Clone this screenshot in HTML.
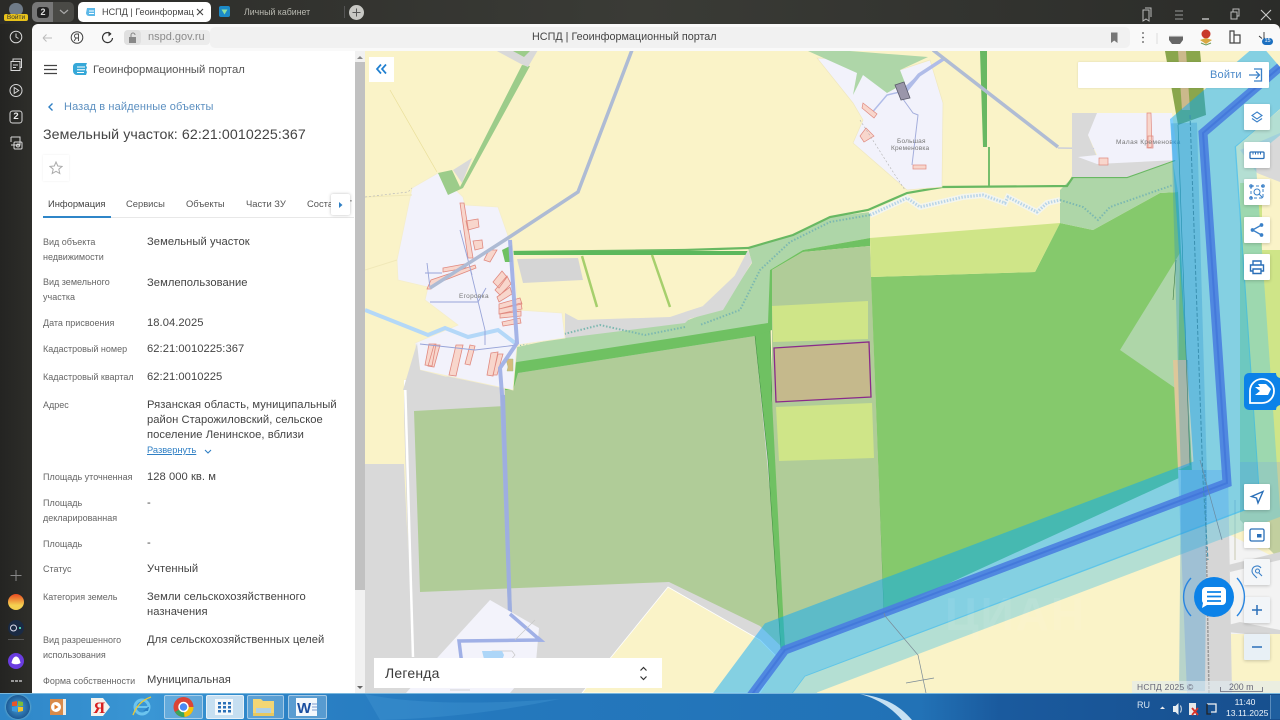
<!DOCTYPE html>
<html lang="ru"><head><meta charset="utf-8"><title>НСПД</title>
<style>
html,body{margin:0;padding:0;width:1280px;height:720px;overflow:hidden;background:#2a2a27;font-family:"Liberation Sans","DejaVu Sans",sans-serif}
.a{position:absolute;white-space:nowrap}
.l{position:absolute;left:43px;font-size:9px;line-height:15px;color:#666;white-space:nowrap}
.v{position:absolute;left:147px;font-size:11.2px;line-height:15px;color:#444;white-space:nowrap;letter-spacing:.05px;margin-top:1px}
.t{position:absolute;top:198px;font-size:9.4px;color:#555;white-space:nowrap}
.b{position:absolute;left:1244px;width:26px;height:26px;background:#fff;border-radius:1px;box-shadow:0 1px 3px rgba(0,0,0,.2)}
.b svg{position:absolute;left:0;top:0}
svg{display:block}
</style></head><body>

<!-- top bar & sidebar -->
<div class="a" style="left:0;top:0;width:1280px;height:24px;background:linear-gradient(90deg,#2b2b28,#3a3b36 50%,#2b2c29)"></div>
<div class="a" style="left:0;top:24px;width:32px;height:670px;background:linear-gradient(90deg,#242422,#2e2e2a)"></div>

<!-- top left -->
<div class="a" style="left:9px;top:3px;width:14px;height:13px;border-radius:7px;background:#6f7b88"></div>
<div class="a" style="left:4px;top:14px;width:24px;height:7px;background:#e8c21a;border-radius:2px;font-size:6.5px;line-height:7px;color:#333;text-align:center">Войти</div>
<div class="a" style="left:32px;top:2px;width:21px;height:20px;background:#777;border-radius:5px 0 0 5px"></div>
<div class="a" style="left:37px;top:7px;width:12px;height:11px;background:#222;border-radius:3px;color:#ddd;font-size:9px;line-height:11px;text-align:center;font-weight:bold">2</div>
<div class="a" style="left:53px;top:2px;width:21px;height:20px;background:#4a4a46;border-radius:0 5px 5px 0"></div>
<svg class="a" style="left:58px;top:8px" width="12" height="8"><path d="M2 2l4 3.5L10 2" fill="none" stroke="#aaa" stroke-width="1.2"/></svg>
<div class="a" style="left:78px;top:2px;width:133px;height:20px;background:#fff;border-radius:5px"></div>
<svg class="a" style="left:85px;top:6px" width="12" height="12"><path d="M2 2h8v8H4a3 3 0 0 1-3-3z" fill="#5cb8e8"/><path d="M4 5h5M4 7.500h5" stroke="#fff"/></svg>
<div class="a" style="left:102px;top:6px;width:92px;overflow:hidden;font-size:9.1px;line-height:12px;color:#444">НСПД | Геоинформаци</div>
<svg class="a" style="left:195px;top:7px" width="10" height="10"><path d="M2 2l6 6M8 2l-6 6" stroke="#444" stroke-width="1.100"/></svg>
<div class="a" style="left:219px;top:6px;width:11px;height:11px;background:#1c8ac8;border-radius:2px"></div>
<svg class="a" style="left:219px;top:6px" width="11" height="11"><path d="M2.500 3.500h6L5.500 8.500z" fill="#8fe0a0"/></svg>
<div class="a" style="left:244px;top:6px;font-size:8.8px;line-height:12px;color:#b8b8b0">Личный кабинет</div>
<div class="a" style="left:344px;top:6px;width:1px;height:12px;background:#555"></div>
<div class="a" style="left:349px;top:5px;width:15px;height:15px;border-radius:8px;background:#c8c8c4"></div>
<svg class="a" style="left:349px;top:5px" width="15" height="15"><path d="M7.500 3.500v8M3.500 7.500h8" stroke="#555" stroke-width="1"/></svg>

<!-- window buttons -->
<svg class="a" style="left:1136px;top:3px" width="144" height="20" fill="none" stroke="#bbb" stroke-width="1">
<path d="M7 7h6v11l-3-2-3 2zM9 5h6v9"/><path d="M39 8h8M39 12h8M39 16h8" stroke="#999"/><path d="M66 16h7" stroke-width="1.500"/><path d="M95 9h6v7h-6zM97 9V6h6v7h-2"/><path d="M125 7l10 10M135 7l-10 10" stroke="#ccc" stroke-width="1.100"/>
</svg>

<!-- address bar -->
<div class="a" style="left:32px;top:24px;width:1248px;height:27px;background:#f9f9f9;border-radius:6px 6px 0 0"></div>
<svg class="a" style="left:32px;top:24px" width="200" height="27" fill="none">
<path d="M11 14h9M11 14l3.500-3.500M11 14l3.500 3.500" stroke="#bbb" stroke-width="1"/>
<circle cx="45" cy="13.500" r="5.800" stroke="#444" stroke-width="1"/><path d="M46.500 17v-7h-2a2 2 0 0 0 0 4h2M44 14l-1.800 3" stroke="#444" stroke-width=".9"/>
<path d="M79 10a5 5 0 1 0 1.500 4" stroke="#333" stroke-width="1.200"/><path d="M76.500 7.500l3 2.500-3 2.500z" fill="#333"/>
</svg>
<div class="a" style="left:124px;top:30px;width:86px;height:15px;background:#ececec;border-radius:4px"></div>
<div class="a" style="left:124px;top:30px;width:17px;height:15px;background:#e0e0e0;border-radius:4px"></div>
<svg class="a" style="left:127px;top:32px" width="12" height="12"><rect x="2" y="5" width="7" height="6" fill="#888"/><path d="M4 5V3a2 2 0 0 1 4 0" fill="none" stroke="#888"/></svg>
<div class="a" style="left:148px;top:30px;font-size:11px;line-height:15px;color:#8b8b8b">nspd.gov.ru</div>
<div class="a" style="left:210px;top:27px;width:920px;height:21px;background:#f1f1f1;border-radius:5px"></div>
<div class="a" style="left:532px;top:31px;font-size:10.800px;line-height:13px;color:#444">НСПД | Геоинформационный портал</div>
<svg class="a" style="left:1108px;top:31px" width="12" height="13"><path d="M3 1.500h6.500V12L6.200 9.500 3 12z" fill="#777"/></svg>
<svg class="a" style="left:1135px;top:26px" width="145" height="24">
<circle cx="8" cy="7" r=".9" fill="#555"/><circle cx="8" cy="11.500" r=".9" fill="#555"/><circle cx="8" cy="16" r=".9" fill="#555"/>
<path d="M22 7v11" stroke="#ddd"/>
<path d="M34 9h14v5l-3 4h-8l-3-4z" fill="#666"/><path d="M34 9h14v1.500H34z" fill="#eee"/>
<circle cx="71" cy="8" r="4.500" fill="#c83a2a"/><path d="M65 14l6-2 6 2-6 4z" fill="#d9a840"/><path d="M66 17l5 2 5-2" stroke="#6a9a5a" fill="none"/>
<path d="M95 5h4v12h-4zM99 9h6v8h-6z" fill="none" stroke="#444" stroke-width="1.200"/>
<path d="M129 6v8M124 10l3 2.500M132 13l-3-1" stroke="#333" stroke-width=".9"/>
<rect x="127" y="12" width="11" height="7" rx="3.500" fill="#1b6fc0"/>
</svg>
<div class="a" style="left:1263px;top:38px;font-size:5.500px;line-height:7px;color:#fff;width:9px;text-align:center">15</div>

<!-- MAP -->
<svg class="a" style="left:0;top:0;filter:blur(.35px)" width="1280" height="694" viewBox="0 0 1280 694">
<defs><clipPath id="m"><rect x="365" y="51" width="915" height="642"/></clipPath></defs>
<g clip-path="url(#m)">
<rect x="365" y="51" width="915" height="642" fill="#faf3c8"/>
<!-- big greys -->
<path d="M365 464H404L413 657 438 693H365z" fill="#d9d9d9"/>
<path d="M403 380L503 372 515 360 760 330 790 650 722 693 668 587 582 693H412z" fill="#d9d9d9"/>
<path d="M405 380L413 657" stroke="#fff" stroke-width="2.500" fill="none"/>
<!-- yellow wedge -->
<path d="M668 587L760 640 780 660 760 693H582z" fill="#faf3c8" stroke="#fff" stroke-width=".8"/>
<!-- west yellow -->
<path d="M365 380H404V463H365z" fill="#faf3c8"/>
<!-- big olive field -->
<path d="M414 411L505 406V375L755 336 785 650 760 626 669 582 420 592z" fill="#b0cc98"/>
<!-- green strip between -->
<path d="M755 336L770 325 772 400 779 462 785 650 781 650 768 460z" fill="#6fc162" stroke="#3a8a3c" stroke-width=".5"/>
<path d="M518 373L755 336 770 325 770 270 803 250 870 238V212L830 217 793 235 748 248 752 263 723 307 680 323 598 330 517 347 512 372z" fill="#aed6a8"/>
<path d="M517 362L680 337 768 323 770 270 803 250 870 238 870 246 803 252 772 270 772 330 755 336 518 373 513 390 505 390 510 365z" fill="#6fc162"/>
<!-- parcels column -->
<path d="M772 270L803 252 870 246 884 613 785 650 772 400z" fill="#b0cc98"/>
<path d="M772 306L868 301 868 339 773 342z" fill="#cfe588"/>
<path d="M776 407L872 403 874 458 779 461z" fill="#cfe588"/>
<path d="M774 348L869 342 871 397 776 402z" fill="#c5b98c" stroke="#8a2a8a" stroke-width="1.300"/>
<path d="M871 246L884 613" stroke="#4a9050" stroke-width=".6"/>
<!-- main green -->
<path d="M871 277L1035 272 1060 223 1093 230 1160 193 1178 192 1192 472 884 613z" fill="#85c96c"/>
<path d="M870 238L1060 223 1035 272 871 277z" fill="#cfe588"/>
<path d="M1180 253L1120 350 1178 390z" fill="#aed6a8"/>
<path d="M1060 190L1060 223 1093 230 1160 193 1178 192 1173 162 1133 175 1073 177 1063 187z" fill="#aed6a8"/>
<!-- north line -->
<path d="M512 252L685 250 748 248 793 235 830 217 868 210 907 193 942 187 1067 186 1073 177 1127 177 1175 160" fill="none" stroke="#68b862" stroke-width="2.200"/>
<path d="M512 253H748" stroke="#5cb85c" stroke-width="4"/>
<path d="M582 256L597 307M652 255L670 307" stroke="#a6cf6c" stroke-width="2.500"/>
<!-- small west parcels -->
<path d="M517 259L578 258 583 280 523 283z" fill="#d5d5d5"/>
<path d="M565 313V338L685 323 748 263 752 262 723 300 685 312 670 317 578 320z" fill="#d9d9d9"/>
<path d="M748 250L752 262 723 310 685 320 685 312 722 300z" fill="#d9d9d9"/>
<!-- river -->
<path d="M870 215L907 198 920 207 963 197 983 195 1005 203 1008 197 1037 212 1047 203 1060 200" fill="none" stroke="#f3f5ee" stroke-width="6"/>
<path d="M870 215L907 198 920 207 963 197 983 195 1005 203 1008 197 1037 212 1047 203 1060 200" fill="none" stroke="#b8d4e8" stroke-width="3" stroke-dasharray="1.500 1.500"/>
<path d="M1060 200L1083 207 1098 220 1110 207 1173 185M685 327L645 335 600 325 520 345M870 215L830 222 790 242 760 270 740 310 700 325" fill="none" stroke="#7cb8b0" stroke-width="2" stroke-dasharray="1.500 1.800"/>
<!-- Egorovka -->
<path d="M412 188L438 173 463 197 465 205 498 207 513 250 518 310 562 313 565 338 517 345 513 390 420 370 415 343 458 325 425 300 428 287 398 280 397 260z" fill="#f2f2fb" stroke="#f5eecb" stroke-width=".8"/>
<path d="M417 343L403 390H498L420 370z" fill="#d9d9d9"/>
<path d="M365 310L428 335 445 328 468 337 498 330 515 343" fill="none" stroke="#b4d8f8" stroke-width="4"/>
<path d="M365 197L412 195M397 260L365 270" stroke="#f0e8b8" fill="none"/>
<g fill="#f8d6cc" stroke="#e08a80" stroke-width=".8">
<path d="M460 203L464 203 473 258 468 258zM466 221L478 219 479 227 468 230zM473 241L482 240 483 248 475 250zM489 250L497 250 490 262 484 260zM443 268L465 264 466 268 443 272z"/>
<path d="M427 289L431 280 475 265 476 268 435 284 431 289zM493 282L502 271 507 277 499 288zM495 290L507 276 511 284 500 295zM497 297L510 287 512 294 499 302zM499 304L520 298 522 304 499 309zM499 309L521 303 522 309 499 314zM500 314L521 311 521 316 500 318zM502 322L520 318 521 323 503 326z"/>
<path d="M429 344L436 344 432 366 425 365zM434 345L440 345 434 367 428 366zM456 345L463 345 456 376 449 375zM470 345L475 346 470 365 465 364zM491 353L498 352 493 376 487 375zM498 354L503 354 497 375 493 375z"/>
</g>
<path d="M427 263L430 288M425 273L442 273M430 302L478 302 486 288M470 268L485 330 485 345M420 344L475 350 517 345M460 230L472 275" fill="none" stroke="#98a4d8" stroke-width=".9"/>
<text x="459" y="298" font-size="6.500" fill="#777" letter-spacing=".3">Егоровка</text>
<path d="M508 350L506 342h7v12h-6z" fill="#d6bc7c" stroke="#a8c080" stroke-width=".5" transform="translate(0 17)"/>
<path d="M502 250L512 245 512 262 505 262z" fill="#6fc162"/>
<!-- NW strip -->
<path d="M522 65L460 187 452 170 438 173 448 195 463 188 530 66z" fill="#9ccc8a"/>
<path d="M472 158L462 183 453 170z" fill="#d9d9d9"/>
<path d="M495 50H538L528 67 521 64z" fill="#d9d9d9"/><path d="M513 51H530L524 57z" fill="#9ccc8a"/>
<path d="M390 90L437 172" stroke="#eadf9a" stroke-width=".7" fill="none"/>
<path d="M365 197L408 192 412 188" stroke="#bbb" stroke-width=".7" stroke-dasharray="2 2" fill="none"/>
<!-- blue-grey pipeline -->
<path d="M632 50L578 192 508 238 430 288" fill="none" stroke="#aebbd4" stroke-width="3.500"/>
<path d="M510 240L517 343 500 368 502 395 510 614 540 640 459 641 462 665" fill="none" stroke="#a0b0e6" stroke-width="4" stroke-opacity=".95"/>
<path d="M503 395L510 614" stroke="#9eaee0" stroke-width="4"/>
<!-- south white settlement -->
<path d="M490 600L539 628 536 662 510 693H406L438 657z" fill="#f3f3fb"/>
<path d="M510 614L540 640 459 641 462 665" fill="none" stroke="#a0b0e6" stroke-width="3.500"/>
<path d="M482 660q8-5 10-9h20l3 4-5 6z" fill="none" stroke="#c8c8c8" stroke-width=".7"/>
<path d="M482 651h20l2 4-3 8h-16z" fill="#add6f8"/>
<path d="M515 640L535 620M450 690L470 690" stroke="#c8c8c8" stroke-width=".7"/>
<!-- Bolshaya Kremenovka -->
<path d="M817 58L853 103 863 120 853 143 907 190 942 187 943 103 930 60 900 70 860 60z" fill="#f2f2fb" stroke="#f0e8c0" stroke-width=".7"/>
<path d="M808 51H850L928 57 900 70 905 83 887 93 863 75 853 95 857 73z" fill="#aed6a8"/>
<path d="M870 115L887 95 900 92 919 75" fill="none" stroke="#b0bce8" stroke-width="1.500"/>
<path d="M905 92L919 75 945 58" fill="none" stroke="#b0bce8" stroke-width="3.500"/>
<path d="M900 95L913 113 918 115 912 165" fill="none" stroke="#a4aedc" stroke-width="1"/>
<path d="M895 85L904 82 910 98 901 100z" fill="#9a96aa" stroke="#5a5a6a" stroke-width=".8"/>
<path d="M863 103L877 114 874 118 862 108zM866 128L874 136 864 142 860 136z" fill="#f8d6cc" stroke="#e08a80" stroke-width=".7"/>
<rect x="913" y="165" width="13" height="4" fill="#f8d6cc" stroke="#e08a80" stroke-width=".7"/>
<path d="M860 120L895 175 905 190" fill="none" stroke="#b0b0b0" stroke-width=".6" stroke-dasharray="2 2"/>
<text x="897" y="143" font-size="6.500" fill="#777" letter-spacing=".2">Большая</text>
<text x="891" y="150" font-size="6.500" fill="#777" letter-spacing=".2">Кременовка</text>
<!-- straight lines -->
<path d="M980 51H987V147H983z" fill="#68b862"/><path d="M989 147V187" stroke="#68b862" stroke-width="1.800"/>
<path d="M933 50L1058 147" stroke="#b0bcd4" stroke-width="3.500"/>
<path d="M1058 148L1160 149" stroke="#b4bce4" stroke-width="1"/>
<!-- Malaya -->
<path d="M1072 113H1097V133L1088 135 1097 157 1175 160 1127 177 1072 177z" fill="#d9d9d9"/>
<path d="M1097 113H1172L1178 160 1097 164 1078 157 1097 155 1088 135z" fill="#f2f2fb"/>
<path d="M1147 113H1151L1152 147 1147 148zM1099 158H1108V165H1099z" fill="#f8d6cc" stroke="#e08a80" stroke-width=".7"/>
<path d="M1148 136h5v12h-5z" fill="none" stroke="#e08a80" stroke-width=".7"/>
<text x="1116" y="144" font-size="6.500" fill="#777" letter-spacing=".4">Малая Кременовка</text>
<!-- east side -->
<path d="M1240 150L1280 133V182L1257 173z" fill="#d9d9d9"/>
<path d="M1240 183H1280V470H1240z" fill="#cfe588"/>
<path d="M1262 183H1280V250H1262z" fill="#faf3c8"/>
<path d="M1240 462H1280V560L1240 520z" fill="#c2cf9f"/>
<path d="M1220 530L1280 560V693H1228z" fill="#f3f3f3"/>
<path d="M1228 565L1280 552V560L1230 572zM1228 625L1240 622 1280 630V638L1228 632z" fill="#d6d6d6"/>
<path d="M1235 500V560" stroke="#c8c8b0"/>
<path d="M1228 634H1280V693H1228z" fill="#faf3c8"/>
<!-- road vertical -->
<path d="M1165 51H1200L1206 115 1178 125z" fill="#8aa64c"/>
<path d="M1178 51H1186L1190 110H1182z" fill="#ccb98c"/>
<path d="M1173 360H1188L1190 465 1178 470z" fill="#ddc79a"/>
<path d="M1178 125L1190 465M1176 260L1173 300" stroke="#3f7a46" stroke-width=".6"/>
<path d="M1178 470H1228L1232 693H1187z" fill="#d6d6d6"/>
<path d="M1205 470L1209 693" stroke="#9a9a9a" stroke-width="1.500" stroke-dasharray="3 1"/>
<!-- canal -->
<path d="M786 718L811 684 1270 510 1245 151 1320 90" fill="none" stroke="#60c8e0" stroke-opacity=".45" stroke-width="20" stroke-linejoin="miter"/>
<path d="M721 736L785 650 1227 483 1203 133 1280 67" fill="none" stroke="#00a8ff" stroke-opacity=".47" stroke-width="64" stroke-linejoin="miter"/>
<path d="M1180 125L1190 480 1188 693" fill="none" stroke="#2090d0" stroke-opacity=".3" stroke-width="26" transform="translate(4 -2)"/>
<path d="M721 736L785 650 1227 483 1203 133 1280 67" fill="none" stroke="#4a80e0" stroke-opacity=".9" stroke-width="9"/>
<path d="M721 736L785 650 1227 483 1203 133 1280 67" fill="none" stroke="#3f74d8" stroke-opacity=".7" stroke-width="2"/>
<path d="M1190 115L1203 480 1208 560" fill="none" stroke="#3a90b0" stroke-width="1" stroke-dasharray="4 2"/>
<path d="M884 613L885 616 918 655 926 693M906 683L934 678" fill="none" stroke="#7a8a96" stroke-width=".7"/>
<path d="M1200 460L1222 540" stroke="#6a8aa0" stroke-width=".7"/>
<text x="945" y="630" font-size="46" font-weight="bold" fill="#fff" fill-opacity=".07" letter-spacing="2">ЦИАН</text>
</g>
</svg>

<!-- panel -->
<div class="a" style="left:32px;top:51px;width:323px;height:642px;background:#fff"></div>
<div class="a" style="left:355px;top:51px;width:10px;height:642px;background:#f1f1f1"></div>
<div class="a" style="left:355px;top:62px;width:10px;height:528px;background:#c1c1c1"></div>
<svg class="a" style="left:355px;top:54px" width="10" height="640"><path d="M5 2l3 3H2z" fill="#888"/><path d="M5 635l-3-3h6z" fill="#666"/></svg>
<svg class="a" style="left:44px;top:64px" width="14" height="11"><path d="M0 1.500h13M0 5.500h13M0 9.500h13" stroke="#444" stroke-width="1.300"/></svg>
<svg class="a" style="left:72px;top:62px" width="16" height="15"><path d="M4 1h11l-1 2.500 1 2-1 2.500 1 2-1 3H5a4 4 0 0 1-4-4V4a4 4 0 0 1 3-3z" fill="#36a8d8"/><path d="M5 5h8M5 7.800h8M5 10.500h7" stroke="#fff" stroke-width="1"/></svg>
<div class="a" style="left:93px;top:63px;font-size:11.300px;line-height:14px;color:#555">Геоинформационный портал</div>
<svg class="a" style="left:47px;top:102px" width="8" height="10"><path d="M5.500 1.500L2 5l3.500 3.500" fill="none" stroke="#2f7fc4" stroke-width="1.400"/></svg>
<div class="a" style="left:64px;top:100px;font-size:11px;line-height:14px;color:#5b8fc0;letter-spacing:.12px">Назад в найденные объекты</div>
<div class="a" style="left:43px;top:127px;font-size:14.200px;line-height:17px;color:#444;letter-spacing:.1px">Земельный участок: 62:21:0010225:367</div>
<div class="a" style="left:43px;top:155px;width:26px;height:26px;background:#fff;box-shadow:0 0 2px rgba(0,0,0,.08)"></div>
<svg class="a" style="left:49px;top:161px" width="14" height="14"><path d="M7 1l1.800 4 4.300.4-3.300 2.800 1 4.300L7 10.300 3.200 12.500l1-4.300L1 5.400l4.300-.4z" fill="none" stroke="#aaa" stroke-width="1"/></svg>

<div class="t" style="left:48px;color:#444">Информация</div>
<div class="t" style="left:126px">Сервисы</div>
<div class="t" style="left:186px">Объекты</div>
<div class="t" style="left:246px">Части ЗУ</div>
<div class="t" style="left:307px;width:46px;overflow:hidden">Состав ЕГ</div>
<div class="a" style="left:43px;top:217px;width:311px;height:1px;background:#e8e8e8"></div>
<div class="a" style="left:43px;top:216px;width:68px;height:2px;background:#2f86c8"></div>
<div class="a" style="left:331px;top:194px;width:19px;height:21px;background:#fff;box-shadow:0 0 3px rgba(0,0,0,.25);border-radius:2px"></div>
<svg class="a" style="left:338px;top:201px" width="6" height="8"><path d="M1 1l3.500 3L1 7z" fill="#2f7fc4"/></svg>

<div class="l" style="top:235px">Вид объекта<br>недвижимости</div>
<div class="v" style="top:234px">Земельный участок</div>
<div class="l" style="top:275px">Вид земельного<br>участка</div>
<div class="v" style="top:275px">Землепользование</div>
<div class="l" style="top:316px">Дата присвоения</div>
<div class="v" style="top:315px">18.04.2025</div>
<div class="l" style="top:342px">Кадастровый номер</div>
<div class="v" style="top:341px">62:21:0010225:367</div>
<div class="l" style="top:370px">Кадастровый квартал</div>
<div class="v" style="top:369px">62:21:0010225</div>
<div class="l" style="top:398px">Адрес</div>
<div class="v" style="top:397px">Рязанская область, муниципальный<br>район Старожиловский, сельское<br>поселение Ленинское, вблизи</div>
<div class="a" style="left:147px;top:444px;font-size:9.300px;line-height:13px;color:#2f7fc4;text-decoration:underline">Развернуть</div>
<svg class="a" style="left:203px;top:448px" width="10" height="8"><path d="M2 2l3 3 3-3" fill="none" stroke="#2f7fc4" stroke-width="1.100"/></svg>
<div class="l" style="top:470px">Площадь уточненная</div>
<div class="v" style="top:469px">128 000 кв. м</div>
<div class="l" style="top:496px">Площадь<br>декларированная</div>
<div class="v" style="top:495px">-</div>
<div class="l" style="top:537px">Площадь</div>
<div class="v" style="top:535px">-</div>
<div class="l" style="top:562px">Статус</div>
<div class="v" style="top:561px">Учтенный</div>
<div class="l" style="top:590px">Категория земель</div>
<div class="v" style="top:589px">Земли сельскохозяйственного<br>назначения</div>
<div class="l" style="top:633px">Вид разрешенного<br>использования</div>
<div class="v" style="top:632px">Для сельскохозяйственных целей</div>
<div class="l" style="top:674px">Форма собственности</div>
<div class="v" style="top:672px">Муниципальная</div>

<!-- sidebar icons -->
<svg class="a" style="left:0;top:24px" width="32" height="670" fill="none" stroke="#d8d8d8" stroke-width="1">
<circle cx="16" cy="13" r="5.800"/><path d="M16 9.500V13l2.500 1.500"/>
<path d="M11 37.500h9v9h-9zM13 37v-2h8.500v8.500H20M13 41h5M13 43.500h3"/>
<circle cx="16" cy="66.500" r="6"/><path d="M14.200 63.500l4.500 3-4.500 3z"/>
<rect x="10" y="87" width="12" height="12" rx="2.500"/>
<path d="M11 113h9v8h-9M11 113v5"/><rect x="14" y="118" width="8" height="7" rx="1"/><circle cx="18" cy="121.500" r="1.500"/>
<path d="M16 546v11M10.500 551.500h11" stroke="#888"/>
<path d="M8 615.500h16" stroke="#555"/>
</svg>
<div class="a" style="left:10px;top:111px;width:12px;text-align:center;font-size:9.500px;line-height:12px;color:#eee;font-weight:bold">2</div>
<div class="a" style="left:8px;top:594px;width:16px;height:16px;border-radius:8px;background:linear-gradient(180deg,#e84a22,#f5d050 70%)"></div>
<div class="a" style="left:8px;top:620px;width:16px;height:16px;border-radius:8px;background:#1a2a44"></div>
<svg class="a" style="left:8px;top:620px" width="16" height="16"><circle cx="5.500" cy="8" r="3" fill="none" stroke="#dde" stroke-width="1"/><circle cx="12" cy="8" r="1" fill="#5fc"/></svg>
<div class="a" style="left:8px;top:653px;width:16px;height:16px;border-radius:8px;background:#6a3ce0"></div>
<svg class="a" style="left:8px;top:653px" width="16" height="16"><path d="M8 3.500c2.500 0 4 3.500 4.500 6.500-1.500 1-3 1.300-4.500 1.300S5 11 3.500 10C4 7 5.500 3.500 8 3.500z" fill="#fff"/></svg>
<div class="a" style="left:11px;top:680px;width:3px;height:2px;background:#999;box-shadow:4px 0 #999,8px 0 #999"></div>

<!-- map controls -->
<div class="a" style="left:369px;top:57px;width:25px;height:25px;background:#fff"></div>
<svg class="a" style="left:375px;top:63px" width="13" height="12"><path d="M6 1.500L2 6l4 4.500M11 1.500L7 6l4 4.500" fill="none" stroke="#1f7fd0" stroke-width="1.700"/></svg>
<div class="a" style="left:1078px;top:62px;width:191px;height:26px;background:#fff;border-radius:1px;box-shadow:0 0 2px rgba(0,0,0,.12)"></div>
<div class="a" style="left:1210px;top:68px;font-size:11px;line-height:14px;color:#4a88c8;letter-spacing:.2px">Войти</div>
<svg class="a" style="left:1248px;top:68px" width="16" height="14" fill="none" stroke="#3a80c8" stroke-width="1.300"><path d="M1 7h10M8 3.500L11.500 7 8 10.500M6 1h7.500v12H6"/></svg>

<div class="b" style="top:104px"><svg width="26" height="26" fill="none" stroke="#3a80c8" stroke-width="1.100"><path d="M13 8l5 3.500-5 3.500-5-3.500zM8 14.500l5 3.500 5-3.500"/></svg></div>
<div class="b" style="top:142px"><svg width="26" height="26" fill="none" stroke="#2a6fb8" stroke-width="1.300"><rect x="6" y="10" width="14" height="6.500" rx="1"/><path d="M9 10v2.500M11.500 10v2.500M14 10v2.500M16.500 10v2.500" stroke-width="1"/></svg></div>
<div class="b" style="top:179px"><svg width="26" height="26" fill="none" stroke="#3a80c8" stroke-width="1"><path d="M7 7h12v12H7z" stroke-dasharray="3 2"/><circle cx="7" cy="7" r="1.300"/><circle cx="19" cy="7" r="1.300"/><circle cx="7" cy="19" r="1.300"/><circle cx="13" cy="13" r="3"/><path d="M15 15l4 4"/></svg></div>
<div class="b" style="top:217px"><svg width="26" height="26" fill="none" stroke="#3a80c8" stroke-width="1.300"><path d="M17.500 8L8.500 13l9 5"/><circle cx="17.500" cy="8" r="1.200" fill="#3a80c8"/><circle cx="8.500" cy="13" r="1.200" fill="#3a80c8"/><circle cx="17.500" cy="18" r="1.200" fill="#3a80c8"/></svg></div>
<div class="b" style="top:254px"><svg width="26" height="26" fill="none" stroke="#2a6fb8" stroke-width="1.400"><path d="M9 11V7h8v4M9 17H6.500v-6h13v6H17M9 15h8v4.500H9z"/></svg></div>
<svg class="a" style="left:1243px;top:372px" width="37" height="38"><path d="M6 1H33Q33 5 37 6V33Q33 34 33 38H6a5 5 0 0 1-5-5V6a5 5 0 0 1 5-5z" fill="#0c82e8"/><path d="M19 7a12 12 0 1 1 0 24H7V19A12 12 0 0 1 19 7z" fill="none" stroke="#fff" stroke-width="1.800"/><path d="M12 15h5l-2-3h8l5 5-3 6H12l5-4z" fill="#fff"/></svg>
<div class="b" style="top:484px"><svg width="26" height="26" fill="none" stroke="#2a6fb8" stroke-width="1.400"><path d="M19 7.500L7.500 12.500l5 1.500 1.500 5z"/></svg></div>
<div class="b" style="top:522px"><svg width="26" height="26" fill="none" stroke="#2a6fb8" stroke-width="1.300"><rect x="6" y="7" width="14" height="12" rx="1.500"/><rect x="13" y="12" width="4.500" height="3.500" fill="#2a6fb8" stroke="none"/></svg></div>
<div class="b" style="top:559px;background:#f4f6f8"><svg width="26" height="26" fill="none" stroke="#3a80c8" stroke-width="1.100"><path d="M13 19c-3-3-5-4.500-5-7a5 5 0 0 1 9-3"/><circle cx="13.500" cy="12" r="2"/><path d="M15 14l3 3"/></svg></div>
<div class="b" style="top:597px;background:#f2f5f8"><svg width="26" height="26" stroke="#2a6fb8" stroke-width="1.500"><path d="M13 8v10M8 13h10"/></svg></div>
<div class="b" style="top:634px;background:#e8f0f6"><svg width="26" height="26" stroke="#2a6fb8" stroke-width="1.500"><path d="M8 13h10"/></svg></div>

<!-- chat -->
<svg class="a" style="left:1180px;top:572px" width="68" height="50"><path d="M11 6a28 28 0 0 0 0 38M57 6a28 28 0 0 1 0 38" fill="none" stroke="#2a86e0" stroke-width="1.400"/><circle cx="34" cy="25" r="20" fill="#0c82e8"/><path d="M26 15h16a4 4 0 0 1 4 4v10a4 4 0 0 1-4 4H27l-5 3 1-5a4 4 0 0 1-1-3V19a4 4 0 0 1 4-4z" fill="#fff" stroke="none"/><path d="M27 20h14M27 24.500h14M27 29h14" stroke="#0c82e8" stroke-width="1.700"/></svg>

<div class="a" style="left:1132px;top:681px;width:148px;height:12px;background:rgba(225,235,240,.6)"></div>
<div class="a" style="left:1137px;top:682px;font-size:8.400px;line-height:10px;color:#667;letter-spacing:.3px">НСПД 2025 ©</div>
<div class="a" style="left:1229px;top:682px;font-size:8.800px;line-height:10px;color:#667">200 m</div>
<svg class="a" style="left:1220px;top:686px" width="44" height="7"><path d="M.5 1v4.500h42V1" fill="none" stroke="#667" stroke-width=".8"/></svg>

<div class="a" style="left:374px;top:658px;width:288px;height:30px;background:#fff"></div>
<div class="a" style="left:385px;top:665px;font-size:14px;line-height:16px;color:#3a3a3a;letter-spacing:.2px">Легенда</div>
<svg class="a" style="left:639px;top:666px" width="9" height="15"><path d="M1.500 4.500L4.500 1.500l3 3M1.500 10.500l3 3 3-3" fill="none" stroke="#333" stroke-width="1.200"/></svg>

<!-- taskbar -->
<div class="a" style="left:0;top:693px;width:1280px;height:27px;background:linear-gradient(90deg,#2e86c8 0,#3a96d4 150px,#2a80c4 300px,#2478bd 500px,#2272b6 920px,#1a5a9e 1000px,#174f8e 1280px);border-top:1px solid #7ab8de;box-sizing:border-box"></div>
<svg class="a" style="left:300px;top:694px" width="980" height="26"><path d="M560 0C585 3 600 12 612 26H602C590 12 575 4 560 0z" fill="#d8ecf8" fill-opacity=".9"/><path d="M65 0Q130 14 260 5 170 24 80 26z" fill="#55a8de" fill-opacity=".25"/></svg>
<div class="a" style="left:1270px;top:695px;width:9px;height:24px;background:#1f5f9f;border-left:1px solid #5a8cbc"></div>
<!-- start orb -->
<div class="a" style="left:6px;top:695px;width:24px;height:24px;border-radius:12px;background:radial-gradient(circle,#4aa2d8,#1c5a96 70%,#223);box-shadow:0 0 2px #9cc"></div>
<svg class="a" style="left:12px;top:701px" width="12" height="12"><path d="M0 1l5-1v5H0z" fill="#e8542a"/><path d="M6 0l5 1v4H6z" fill="#7cbc3a"/><path d="M0 6h5v5L0 10z" fill="#3a9ae0"/><path d="M6 6h5v4l-5 1z" fill="#f5c32a"/></svg>
<!-- app buttons -->
<div class="a" style="left:164px;top:695px;width:39px;height:24px;background:rgba(255,255,255,.22);border:1px solid rgba(255,255,255,.45);box-sizing:border-box;border-radius:2px"></div>
<div class="a" style="left:206px;top:695px;width:38px;height:24px;background:rgba(255,255,255,.72);border:1px solid rgba(255,255,255,.6);box-sizing:border-box;border-radius:2px"></div>
<div class="a" style="left:247px;top:695px;width:37px;height:24px;background:rgba(255,255,255,.22);border:1px solid rgba(255,255,255,.45);box-sizing:border-box;border-radius:2px"></div>
<div class="a" style="left:288px;top:695px;width:39px;height:24px;background:rgba(255,255,255,.22);border:1px solid rgba(255,255,255,.45);box-sizing:border-box;border-radius:2px"></div>
<svg class="a" style="left:0;top:694px" width="340" height="26">
<rect x="50" y="5" width="16" height="16" fill="#f0ece4"/><rect x="50" y="5" width="13" height="16" fill="#d88a4a"/><circle cx="56" cy="13" r="5" fill="#fff"/><path d="M54.500 10.500l4 2.500-4 2.500z" fill="#e07a2a"/>
<path d="M91 4h12l7 9-7 9H91z" fill="#f5f2ec"/><text x="93.500" y="19" font-family="Liberation Serif,serif" font-size="16" font-weight="bold" fill="#d82020">Я</text>
<circle cx="142" cy="13" r="7" fill="none" stroke="#6cc4ee" stroke-width="3"/><path d="M136 13h12" stroke="#6cc4ee" stroke-width="2"/><path d="M149 13l-1 4h-5l5-4z" fill="#2a80c4"/><path d="M133 21c3-8 9-15 18-18" fill="none" stroke="#e8c83a" stroke-width="1.400"/>
<circle cx="183.500" cy="13" r="10" fill="#db4437"/><path d="M183.500 13L175 18a10 10 0 0 0 10 5z" fill="#3ba55c"/><path d="M183.500 13h10a10 10 0 0 1-9 10z" fill="#f4c20d"/><circle cx="183.500" cy="13" r="4.500" fill="#4a8af4" stroke="#fff" stroke-width="1.500"/>
<rect x="215" y="5" width="18" height="16" fill="#f4f8fb"/><g fill="#2a70b8"><rect x="218" y="8" width="3" height="2.500"/><rect x="223" y="8" width="3" height="2.500"/><rect x="228" y="8" width="3" height="2.500"/><rect x="218" y="12" width="3" height="2.500"/><rect x="223" y="12" width="3" height="2.500"/><rect x="228" y="12" width="3" height="2.500"/><rect x="218" y="16" width="3" height="2.500"/><rect x="223" y="16" width="3" height="2.500"/><rect x="228" y="16" width="3" height="2.500"/></g>
<path d="M253 5h8l2 2h11v15h-21z" fill="#f3d675"/><path d="M256 14h15v5h-15z" fill="#aed0e8"/><path d="M253 19h21v3h-21z" fill="#e8c860"/>
<rect x="296" y="4" width="21" height="18" fill="#f4f8fc"/><text x="297" y="19" font-size="15" font-weight="bold" fill="#1a4ea0">W</text><path d="M312 10h5M312 13h5M312 16h5" stroke="#7a9ad0"/>
</svg>
<div class="a" style="left:1137px;top:700px;font-size:9px;line-height:11px;color:#d8e6f2">RU</div>
<svg class="a" style="left:1155px;top:698px" width="62" height="20"><path d="M3 10l2.500-2.500L8 10z" fill="#eee" transform="translate(2 1)"/><path d="M18 8h2.500l3-3v12l-3-3H18z" fill="#e8eef2"/><path d="M25.500 7.500c1 2 1 5 0 7" fill="none" stroke="#e8eef2"/><path d="M34 5h7v12h-7z" fill="#e8e8e8"/><path d="M37 10l6 7M43 10l-6 7" stroke="#d8342a" stroke-width="1.800"/><path d="M52 6h9v8h-5" fill="none" stroke="#f4f4f4" stroke-width="1.300"/><path d="M52 6v10h4" fill="none" stroke="#222" stroke-width="1.300"/></svg>
<div class="a" style="left:1226px;top:697px;width:38px;font-size:8.600px;line-height:11px;color:#eef4fa;text-align:center">11:40<br>13.11.2025</div>
</body></html>
